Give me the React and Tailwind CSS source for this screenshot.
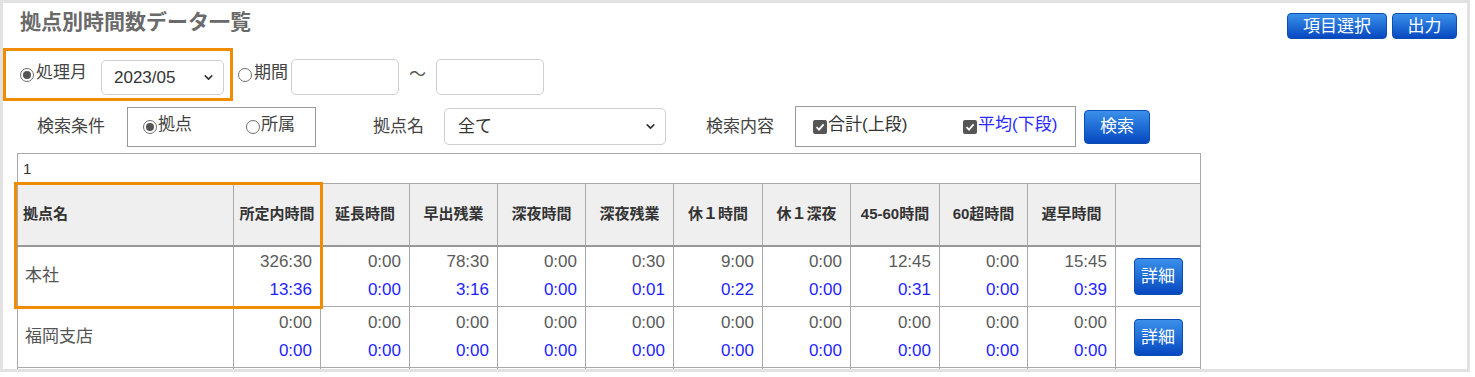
import { ChevronDown } from "lucide-react";

const cols = [216, 87, 89, 88, 88, 88, 89, 88, 89, 88, 88, 85];
const heads = ["所定内時間", "延長時間", "早出残業", "深夜時間", "深夜残業", "休１時間", "休１深夜", "45-60時間", "60超時間", "遅早時間"];

const rows = [
  {
    name: "本社",
    top: ["326:30", "0:00", "78:30", "0:00", "0:30", "9:00", "0:00", "12:45", "0:00", "15:45"],
    avg: ["13:36", "0:00", "3:16", "0:00", "0:01", "0:22", "0:00", "0:31", "0:00", "0:39"],
  },
  {
    name: "福岡支店",
    top: ["0:00", "0:00", "0:00", "0:00", "0:00", "0:00", "0:00", "0:00", "0:00", "0:00"],
    avg: ["0:00", "0:00", "0:00", "0:00", "0:00", "0:00", "0:00", "0:00", "0:00", "0:00"],
  },
];

const blueBtn =
  "flex items-center justify-center rounded-[4px] border border-[#0b4db0] bg-linear-to-b from-[#3b90ea] to-[#0847c0] text-white text-[17px] leading-none";

function Radio({ checked }) {
  return (
    <span className="inline-flex w-[14px] h-[14px] shrink-0 rounded-full border border-[#707070] bg-white items-center justify-center">
      {checked && <span className="w-[8px] h-[8px] rounded-full bg-[#555]" />}
    </span>
  );
}

function Check() {
  return (
    <span className="inline-flex w-[14px] h-[14px] shrink-0 rounded-[2px] bg-[#555] items-center justify-center">
      <svg width="10" height="10" viewBox="0 0 10 10">
        <path d="M1.5 5.2 L4 7.6 L8.6 2.4" fill="none" stroke="white" strokeWidth="1.8" />
      </svg>
    </span>
  );
}

function Select({ className, children }) {
  return (
    <div className={`flex items-center justify-between border border-[#cfcfcf] rounded-[5px] bg-white text-[#333] ${className}`}>
      <span>{children}</span>
      <ChevronDown size={13} strokeWidth={3} className="text-[#333]" />
    </div>
  );
}

export default function App() {
  return (
    <div className="w-[1470px] h-[372px] border-[3px] border-[#e2e2e2] bg-white overflow-hidden font-['Liberation_Sans','Noto_Sans_CJK_JP',sans-serif] text-[#444]">
      {/* title */}
      <div className="flex items-start justify-between pl-[17px] pr-[10px] pt-[4px]">
        <h1 className="text-[21px] leading-[30px] font-bold text-[#6a6a6a]">拠点別時間数データ一覧</h1>
        <div className="flex gap-[5px] mt-[6px]">
          <button className={`${blueBtn} w-[100px] h-[26px]`}>項目選択</button>
          <button className={`${blueBtn} w-[65px] h-[26px]`}>出力</button>
        </div>
      </div>

      {/* row 1 */}
      <div className="flex items-start mt-[9px] text-[17px]">
        <div className="flex items-center w-[230px] h-[53px] border-[3px] border-[#f08c00] pl-[14px]">
          <Radio checked />
          <span className="ml-[2px] leading-[20px] -mt-[3px]">処理月</span>
          <Select className="ml-[14px] mt-[6px] w-[123px] h-[35px] pl-[12px] pr-[8px]">2023/05</Select>
        </div>
        <div className="flex items-center ml-[5px] mt-[18px]">
          <Radio />
          <span className="ml-[2px] leading-[20px] -mt-[3px]">期間</span>
        </div>
        <div className="ml-[3px] mt-[11px] w-[108px] h-[36px] border border-[#cfcfcf] rounded-[5px]" />
        <span className="ml-[10px] mt-[17px] leading-[20px] text-[#555]">〜</span>
        <div className="ml-[10px] mt-[11px] w-[108px] h-[36px] border border-[#cfcfcf] rounded-[5px]" />
      </div>

      {/* row 2 */}
      <div className="flex items-center mt-[5px] h-[41px] text-[17px]">
        <span className="ml-[34px] w-[90px] leading-[20px]">検索条件</span>
        <div className="flex items-center w-[189px] h-[40px] border border-[#999] pl-[15px]">
          <Radio checked />
          <span className="ml-[1px] w-[88px] leading-[20px] -mt-[4px]">拠点</span>
          <Radio />
          <span className="ml-[1px] leading-[20px] -mt-[4px]">所属</span>
        </div>
        <span className="ml-[57px] w-[71px] leading-[20px]">拠点名</span>
        <Select className="w-[222px] h-[37px] pl-[13px] pr-[8px]">全て</Select>
        <span className="ml-[40px] w-[89px] leading-[20px]">検索内容</span>
        <div className="flex items-center w-[281px] h-[41px] border border-[#999] pl-[17px]">
          <Check />
          <span className="ml-[1px] w-[135px] leading-[20px] -mt-[4px] text-[#333]">合計(上段)</span>
          <Check />
          <span className="ml-[1px] leading-[20px] -mt-[4px] text-[#2a2aff]">平均(下段)</span>
        </div>
        <button className={`${blueBtn} ml-[8px] w-[66px] h-[34px]`}>検索</button>
      </div>

      {/* table */}
      <div className="relative ml-[14px] mt-[6px] w-[1183px]">
        <table className="table-fixed border-collapse w-[1183px] text-[17px]">
          <colgroup>
            {cols.map((w, i) => (
              <col key={i} style={{ width: w }} />
            ))}
          </colgroup>
          <tbody>
            <tr className="h-[30px]">
              <td colSpan={12} className="border border-[#aaa] pl-[5px] text-[15px] text-[#333] leading-[20px]">1</td>
            </tr>
            <tr className="h-[62px] bg-[#efefef] text-[15px] font-bold text-[#333]">
              <td className="border border-[#aaa] border-b-2 border-b-[#999] pl-[5px]">拠点名</td>
              {heads.map((h) => (
                <td key={h} className="border border-[#aaa] border-b-2 border-b-[#999] text-center whitespace-nowrap">{h}</td>
              ))}
              <td className="border border-[#aaa] border-b-2 border-b-[#999]" />
            </tr>
            {rows.map((r) => (
              <tr key={r.name} className="h-[61px]">
                <td className="border border-[#aaa] pl-[7px] text-[#555] leading-[20px]">{r.name}</td>
                {r.top.map((v, i) => (
                  <td key={i} className="border border-[#aaa] pr-[8px] text-right">
                    <div className="leading-[28px] text-[#5a5a5a]">{v}</div>
                    <div className="leading-[28px] text-[#1f1fff]">{r.avg[i]}</div>
                  </td>
                ))}
                <td className="border border-[#aaa]">
                  <button className={`${blueBtn} mx-auto w-[49px] h-[37px]`}>詳細</button>
                </td>
              </tr>
            ))}
            <tr className="h-[40px]">
              {cols.map((w, i) => (
                <td key={i} className="border border-[#aaa]" />
              ))}
            </tr>
          </tbody>
        </table>
        <div className="absolute left-[-3px] top-[29px] w-[309px] h-[127px] border-[3px] border-[#f08c00]" />
      </div>
    </div>
  );
}
